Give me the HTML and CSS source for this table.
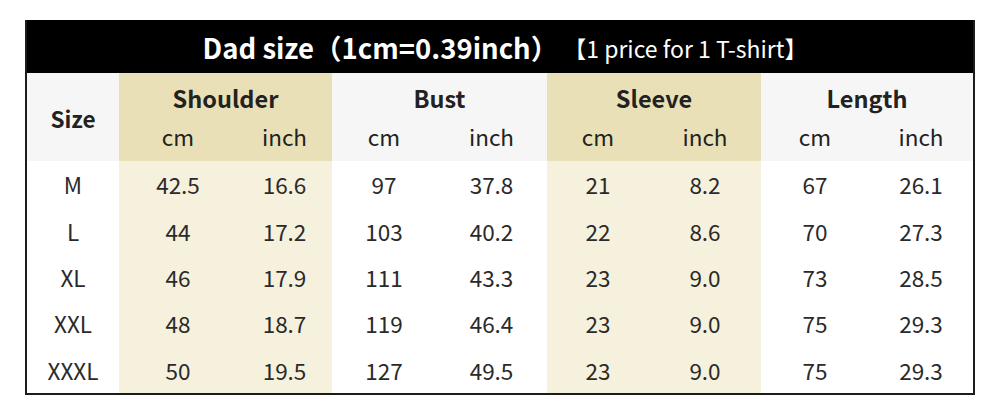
FILE: index.html
```html
<!DOCTYPE html>
<html lang="en">
<head>
    <meta charset="UTF-8">
    <meta name="viewport" content="width=device-width, initial-scale=1.0">
    <title>Dad size chart</title>
    <link rel="stylesheet" href="styles.css">
</head>
<body>
    <div class="chart">
        <div class="title">
            <span class="main">Dad size（1cm=0.39inch）</span>
            <span class="note">【1 price for 1 T-shirt】</span>
        </div>

        <div class="grid">
            <!-- header -->
            <div class="cell head size-head">Size</div>
            <div class="cell head group hl">Shoulder</div>
            <div class="cell head group">Bust</div>
            <div class="cell head group hl">Sleeve</div>
            <div class="cell head group">Length</div>

            <div class="cell head unit hl">cm</div>
            <div class="cell head unit hl">inch</div>
            <div class="cell head unit">cm</div>
            <div class="cell head unit">inch</div>
            <div class="cell head unit hl">cm</div>
            <div class="cell head unit hl">inch</div>
            <div class="cell head unit">cm</div>
            <div class="cell head unit">inch</div>

            <!-- rows -->
            <div class="cell">M</div>
            <div class="cell hl">42.5</div><div class="cell hl">16.6</div>
            <div class="cell">97</div><div class="cell">37.8</div>
            <div class="cell hl">21</div><div class="cell hl">8.2</div>
            <div class="cell">67</div><div class="cell">26.1</div>

            <div class="cell">L</div>
            <div class="cell hl">44</div><div class="cell hl">17.2</div>
            <div class="cell">103</div><div class="cell">40.2</div>
            <div class="cell hl">22</div><div class="cell hl">8.6</div>
            <div class="cell">70</div><div class="cell">27.3</div>

            <div class="cell">XL</div>
            <div class="cell hl">46</div><div class="cell hl">17.9</div>
            <div class="cell">111</div><div class="cell">43.3</div>
            <div class="cell hl">23</div><div class="cell hl">9.0</div>
            <div class="cell">73</div><div class="cell">28.5</div>

            <div class="cell">XXL</div>
            <div class="cell hl">48</div><div class="cell hl">18.7</div>
            <div class="cell">119</div><div class="cell">46.4</div>
            <div class="cell hl">23</div><div class="cell hl">9.0</div>
            <div class="cell">75</div><div class="cell">29.3</div>

            <div class="cell">XXXL</div>
            <div class="cell hl">50</div><div class="cell hl">19.5</div>
            <div class="cell">127</div><div class="cell">49.5</div>
            <div class="cell hl">23</div><div class="cell hl">9.0</div>
            <div class="cell">75</div><div class="cell">29.3</div>
        </div>
    </div>
</body>
</html>
```

FILE: styles.css
```css
body {
    margin: 0;
    padding: 20px 0 0 25px;
    background: #ffffff;
    font-family: "Noto Sans CJK SC", "Noto Sans", sans-serif;
    color: #222;
}
.chart {
    width: 946px;
    border: 2px solid #1c1c1c;
    border-top: none;
    background: #fff;
}
.title {
    height: 53px;
    background: #000;
    color: #fff;
    display: flex;
    align-items: center;
    justify-content: center;
    gap: 5px;
    padding-left: 10px;
}
.title .main {
    font-size: 27.5px;
    font-weight: bold;
}
.title .note {
    font-size: 23px;
    padding-top: 2px;
}
.grid {
    display: grid;
    grid-template-columns: 92px 118px 95px 104px 111px 102px 112px 108px 104px;
    grid-template-rows: 46px 42px repeat(5, 46.4px);
}
.cell {
    display: flex;
    align-items: center;
    justify-content: center;
    font-size: 22.5px;
    background: #fff;
    color: #2a2a2a;
}
.cell.hl {
    background: #f5f1dd;
}
.head {
    background: #f6f6f6;
    color: #222;
}
.head.hl {
    background: #e9e0b7;
}
.size-head {
    grid-row: span 2;
    font-weight: bold;
    font-size: 22.5px;
    padding-top: 2px;
}
.group {
    grid-column: span 2;
    font-weight: bold;
    font-size: 23.5px;
    padding-top: 4px;
}
.unit {
    padding-bottom: 8px;
}
```
